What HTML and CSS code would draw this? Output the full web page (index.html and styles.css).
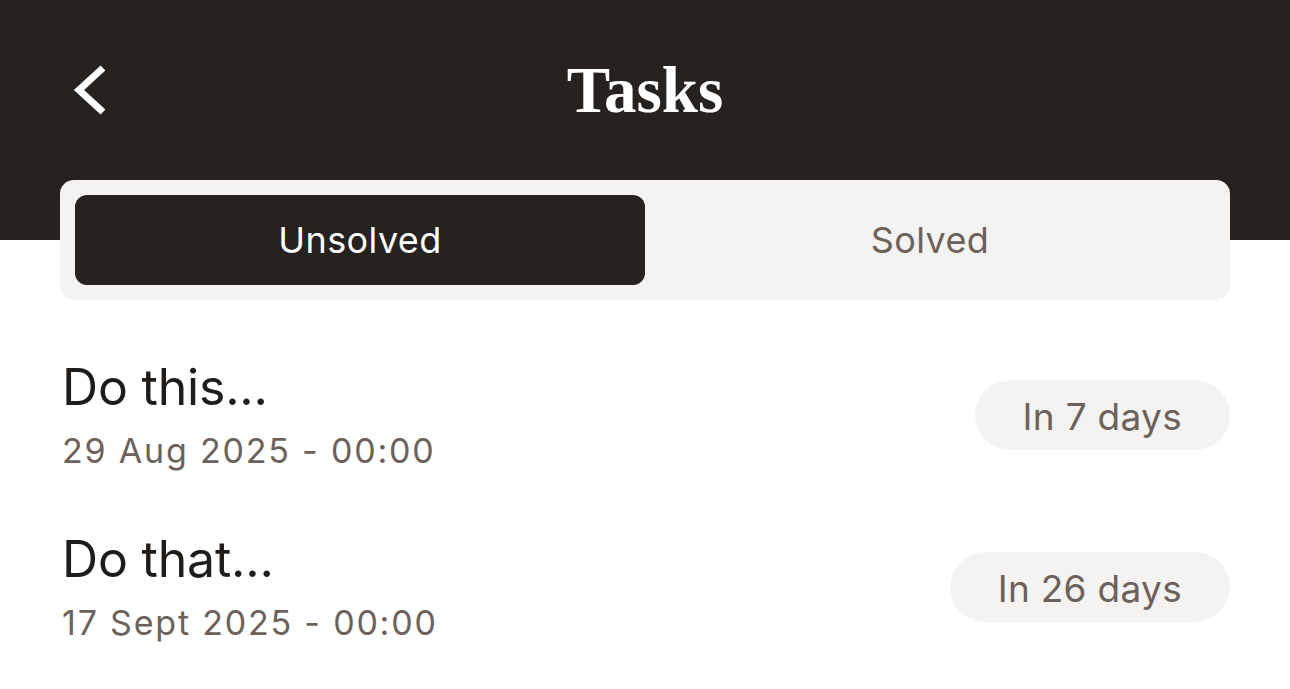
FILE: index.html
```html
<!DOCTYPE html>
<html lang="en">
<head>
<meta charset="utf-8">
<title>Tasks</title>
<link rel="stylesheet" href="styles.css">
</head>
<body>
<div class="top">
  <header class="nav">
    <button class="back" aria-label="Back">
      <svg width="34" height="50" viewBox="0 0 34 50"><polyline points="31,3 7,25 31,47" fill="none" stroke="#fff" stroke-width="7" stroke-linejoin="miter"/></svg>
    </button>
    <h1 class="title">Tasks</h1>
    <span class="spacer"></span>
  </header>
  <div class="tabs">
    <div class="tab active">Unsolved</div>
    <div class="tab">Solved</div>
  </div>
</div>
<ul class="list">
  <li class="row">
    <div class="info">
      <div class="name">Do this...</div>
      <div class="date">29 Aug 2025 - 00:00</div>
    </div>
    <span class="pill">In 7 days</span>
  </li>
  <li class="row">
    <div class="info">
      <div class="name">Do that...</div>
      <div class="date">17 Sept 2025 - 00:00</div>
    </div>
    <span class="pill">In 26 days</span>
  </li>
</ul>
</body>
</html>
```

FILE: styles.css
```css
* { box-sizing: border-box; }
html, body { margin: 0; padding: 0; background: #ffffff; }
body {
  font-family: Inter, "Noto Sans", sans-serif;
  color: #1f1c1a;
  width: 1290px;
  height: 689px;
  overflow: hidden;
}
.top {
  background: linear-gradient(to bottom, #26221f 0, #26221f 240px, #ffffff 240px);
  padding: 0 60px;
}
.nav {
  height: 180px;
  display: grid;
  grid-template-columns: 120px 1fr 120px;
  align-items: center;
}
.back {
  background: none;
  border: 0;
  padding: 0;
  margin: 0 0 0 12px;
  width: 34px;
  height: 50px;
  display: flex;
  cursor: pointer;
}
.title {
  margin: 0;
  text-align: center;
  font-family: "Liberation Serif", "Times New Roman", serif;
  font-weight: 700;
  font-size: 65px;
  color: #ffffff;
  letter-spacing: 0;
}
.tabs {
  height: 120px;
  background: #f5f3f1;
  border-radius: 14px;
  padding: 15px;
  display: flex;
}
.tab {
  flex: 1;
  height: 90px;
  border-radius: 12px;
  display: flex;
  align-items: center;
  justify-content: center;
  font-size: 36px;
  letter-spacing: 0.4px;
  color: #6b625c;
}
.tab.active {
  background: #26221f;
  color: #ffffff;
}
.list {
  list-style: none;
  margin: 29px 0 0;
  padding: 0 60px 0 62px;
}
.row {
  height: 172px;
  display: flex;
  align-items: center;
  justify-content: space-between;
}
.name {
  font-size: 50px;
  line-height: 60px;
  letter-spacing: -0.2px;
  color: #1f1c1a;
}
.date {
  margin-top: 12px;
  font-size: 34px;
  line-height: 44px;
  color: #6b625c;
  letter-spacing: 1.8px;
}
.pill {
  height: 70px;
  border-radius: 35px;
  background: #f5f3f1;
  color: #6b625c;
  font-size: 37px;
  line-height: 70px;
  letter-spacing: 0.3px;
  padding: 2px 48px 0;
}
```
